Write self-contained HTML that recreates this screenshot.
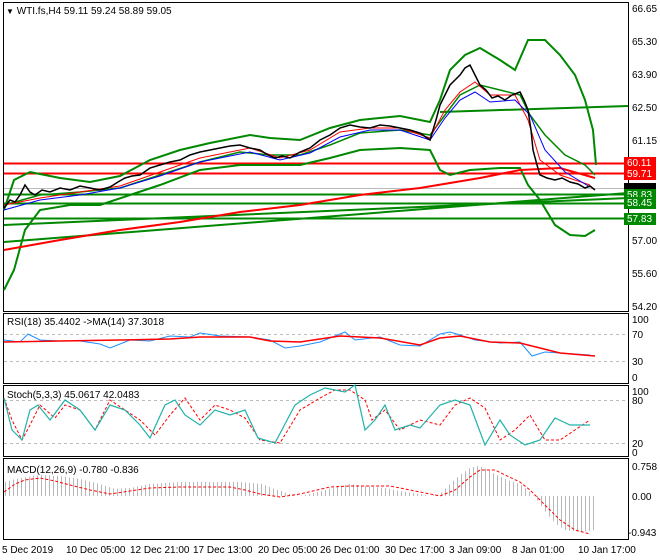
<!DOCTYPE html>
<html><head><style>
body{margin:0;background:#fff;}
svg{display:block;font-family:"Liberation Sans",sans-serif;font-size:10px;}
</style></head><body>
<svg width="660" height="560" viewBox="0 0 660 560">
<defs>
<pattern id="bars" width="4" height="10" patternUnits="userSpaceOnUse">
<rect x="1" y="0" width="1" height="10" fill="#b8b8b8"/>
</pattern>
</defs>
<rect width="660" height="560" fill="#fff"/>
<rect x="3.5" y="2.5" width="625" height="309" fill="none" stroke="#000"/>
<rect x="3.5" y="313.5" width="625" height="70" fill="none" stroke="#000"/>
<rect x="3.5" y="385.5" width="625" height="71" fill="none" stroke="#000"/>
<rect x="3.5" y="458.5" width="625" height="81" fill="none" stroke="#000"/>
<g fill="#000">
<text x="632" y="12">66.65</text><text x="632" y="45">65.30</text><text x="632" y="78">63.90</text>
<text x="632" y="111">62.50</text><text x="632" y="144">61.15</text><text x="632" y="244">57.00</text>
<text x="632" y="277">55.60</text><text x="632" y="310">54.20</text>
<text x="632" y="323">100</text><text x="632" y="338">70</text><text x="632" y="365">30</text><text x="632" y="381">0</text>
<text x="632" y="395">100</text><text x="632" y="404">80</text><text x="632" y="447">20</text><text x="632" y="456">0</text>
<text x="632" y="470">0.758</text><text x="632" y="500">0.00</text><text x="628" y="536">-0.943</text>
</g>
<line x1="4" y1="163.5" x2="628" y2="163.5" stroke="#f00" stroke-width="2"/>
<line x1="4" y1="173.5" x2="628" y2="173.5" stroke="#f00" stroke-width="2"/>
<line x1="4" y1="188.5" x2="628" y2="188.5" stroke="#bbb"/>
<line x1="4" y1="194.5" x2="628" y2="194.5" stroke="#080" stroke-width="2"/>
<line x1="4" y1="203.5" x2="628" y2="203.5" stroke="#080" stroke-width="2"/>
<line x1="4" y1="218.5" x2="628" y2="218.5" stroke="#080" stroke-width="2"/>
<line x1="4" y1="225" x2="628" y2="198" stroke="#080" stroke-width="2"/>
<line x1="4" y1="242" x2="628" y2="193" stroke="#080" stroke-width="2"/>
<line x1="440" y1="112" x2="628" y2="106" stroke="#080" stroke-width="2"/>
<polyline fill="none" stroke="#080" stroke-width="2" points="4,290 14,270 25,230 40,210 70,205 100,205 130,195 160,185 200,170 240,165 270,165 300,165 330,158 360,150 400,148 430,150 440,170 450,175 470,170 500,168 520,168 528,185 540,200 555,225 570,235 585,236 595,230"/>
<polyline fill="none" stroke="#080" stroke-width="2" points="4,210 14,180 30,172 60,178 90,182 120,176 150,160 180,150 210,143 250,135 270,138 300,140 330,128 360,120 400,116 430,122 440,100 450,70 465,55 480,48 500,60 515,70 528,40 545,40 560,55 575,75 585,100 593,130 596,165"/>
<polyline fill="none" stroke="#080" stroke-width="1.5" points="4,205 40,195 80,192 120,188 160,175 200,162 240,152 270,155 300,155 330,145 360,133 400,130 430,135 445,115 460,95 480,85 500,90 520,95 530,115 545,135 565,155 585,165 595,175"/>
<polyline fill="none" stroke="#f00" stroke-width="2" points="4,250 60,240 120,230 180,222 240,212 300,205 360,195 420,188 480,178 520,170 560,168 595,178"/>
<polyline fill="none" stroke="#f00" stroke-width="1" points="4,205 40,198 80,192 120,186 160,172 200,158 250,148 280,158 310,150 340,132 370,128 400,128 430,138 445,110 460,92 475,82 490,95 515,95 528,120 540,160 560,175 590,185"/>
<polyline fill="none" stroke="#00f" stroke-width="1" points="4,210 40,200 80,195 120,188 160,176 200,162 250,152 280,160 310,153 340,137 370,130 400,130 430,140 445,118 460,100 475,92 490,102 515,100 530,115 545,150 565,172 590,187"/>
<polyline fill="none" stroke="#000" stroke-width="1.5" points="4,208 10,200 15,202 20,195 25,185 30,192 35,195 42,190 50,192 60,188 70,190 80,186 90,188 100,190 110,187 118,182 125,178 132,176 140,175 150,168 160,165 170,162 180,160 190,155 200,152 210,150 220,148 230,146 240,145 250,148 260,150 268,155 275,158 282,156 290,158 300,152 310,148 320,140 330,135 340,128 350,125 360,127 370,128 380,125 390,126 400,128 410,130 420,133 430,140 436,120 440,105 445,95 450,85 455,80 460,75 465,68 470,65 475,75 480,85 486,90 492,98 498,96 505,100 512,95 520,92 524,100 528,110 531,130 533,150 537,165 540,175 547,178 555,180 562,178 570,182 578,184 585,188 590,186 595,190"/>
<rect x="624" y="157" width="32" height="12" fill="#f00"/><text x="627" y="166" fill="#fff">60.11</text>
<rect x="624" y="168" width="32" height="12" fill="#f00"/><text x="627" y="177" fill="#fff">59.71</text>
<rect x="624" y="183" width="32" height="10" fill="#000"/>
<rect x="624" y="189" width="32" height="12" fill="#080"/><text x="627" y="198" fill="#fff">58.83</text>
<rect x="624" y="197" width="32" height="12" fill="#080"/><text x="627" y="206" fill="#fff">58.45</text>
<rect x="624" y="213" width="32" height="12" fill="#080"/><text x="627" y="222" fill="#fff">57.83</text>
<text x="6" y="14" fill="#000"><tspan font-size="8">▼</tspan> WTI.fs,H4  59.11 59.24 58.89 59.05</text>
<text x="7" y="325">RSI(18) 35.4402  -&gt;MA(14) 37.3018</text>
<line x1="4" y1="334.5" x2="628" y2="334.5" stroke="#bbb" stroke-dasharray="3,3"/>
<line x1="4" y1="361.5" x2="628" y2="361.5" stroke="#bbb" stroke-dasharray="3,3"/>
<polyline fill="none" stroke="#1e90ff" points="4,340 20,342 28,334 40,340 60,341 80,341 100,344 110,348 130,340 150,341 170,336 190,337 200,333 220,336 250,337 270,340 285,348 300,346 320,342 345,332 355,340 380,337 400,345 420,346 440,334 450,332 460,335 475,340 500,343 520,342 532,356 545,352 560,353 590,355"/>
<polyline fill="none" stroke="#f00" stroke-width="1.5" points="4,342 60,341 120,340 170,339 200,337 250,337 270,341 300,342 340,336 380,338 420,345 440,338 460,336 490,342 520,343 540,348 560,353 595,356"/>
<text x="7" y="398">Stoch(5,3,3) 45.0617 42.0483</text>
<line x1="4" y1="400.5" x2="628" y2="400.5" stroke="#bbb" stroke-dasharray="3,3"/>
<line x1="4" y1="443.5" x2="628" y2="443.5" stroke="#bbb" stroke-dasharray="3,3"/>
<polyline fill="none" stroke="#f00" stroke-dasharray="3,2" points="4,398 12,420 22,440 30,425 40,405 55,418 65,405 80,410 95,430 110,400 125,410 140,420 155,435 170,415 185,398 200,420 215,405 230,410 245,418 260,440 280,443 300,410 320,398 335,390 350,390 365,400 372,420 385,410 400,430 420,420 440,425 455,405 470,398 485,408 500,440 515,430 530,415 545,440 560,440 575,430 590,420"/>
<polyline fill="none" stroke="#20b2aa" stroke-width="1.2" points="4,398 12,430 22,440 30,410 38,405 50,420 65,400 80,410 95,430 110,405 125,410 140,425 150,438 165,405 175,400 185,415 200,425 215,410 230,415 245,410 258,438 275,443 295,405 310,395 325,388 345,392 355,385 365,430 375,420 385,405 395,430 410,425 420,428 440,405 455,400 470,405 485,445 500,420 510,435 525,445 540,440 555,418 570,425 590,425"/>
<text x="7" y="473">MACD(12,26,9) -0.780 -0.836</text>
<polygon fill="url(#bars)" points="4,496 4,482 20,478 40,475 60,476 80,479 100,484 115,489 130,488 150,484 180,482 210,482 240,482 262,484 275,489 290,494 300,496 310,494 325,490 340,486 350,484 365,486 385,488 400,491 420,494 430,496 440,494 450,484 460,475 470,468 478,466 485,468 495,474 510,481 520,484 528,490 534,496 534,496 534,496"/>
<polygon fill="url(#bars)" points="534,496 540,504 548,515 556,524 565,530 580,532 596,530 596,496"/>
<polyline fill="none" stroke="#f00" stroke-dasharray="3,2" points="4,492 15,484 25,480 40,478 55,481 70,485 90,490 110,494 130,491 150,488 180,487 210,487 230,487 245,490 260,494 280,497 300,494 330,487 350,486 370,486 390,486 410,490 430,494 440,496 455,490 470,477 480,470 495,470 505,475 520,482 530,490 545,505 560,520 575,530 590,534"/>
<g fill="#000">
<text x="2" y="553">5 Dec 2019</text><text x="66" y="553">10 Dec 05:00</text><text x="130" y="553">12 Dec 21:00</text>
<text x="193" y="553">17 Dec 13:00</text><text x="258" y="553">20 Dec 05:00</text><text x="320" y="553">26 Dec 01:00</text>
<text x="385" y="553">30 Dec 17:00</text><text x="449" y="553">3 Jan 09:00</text><text x="512" y="553">8 Jan 01:00</text>
<text x="578" y="553">10 Jan 17:00</text>
</g>
</svg>
</body></html>
